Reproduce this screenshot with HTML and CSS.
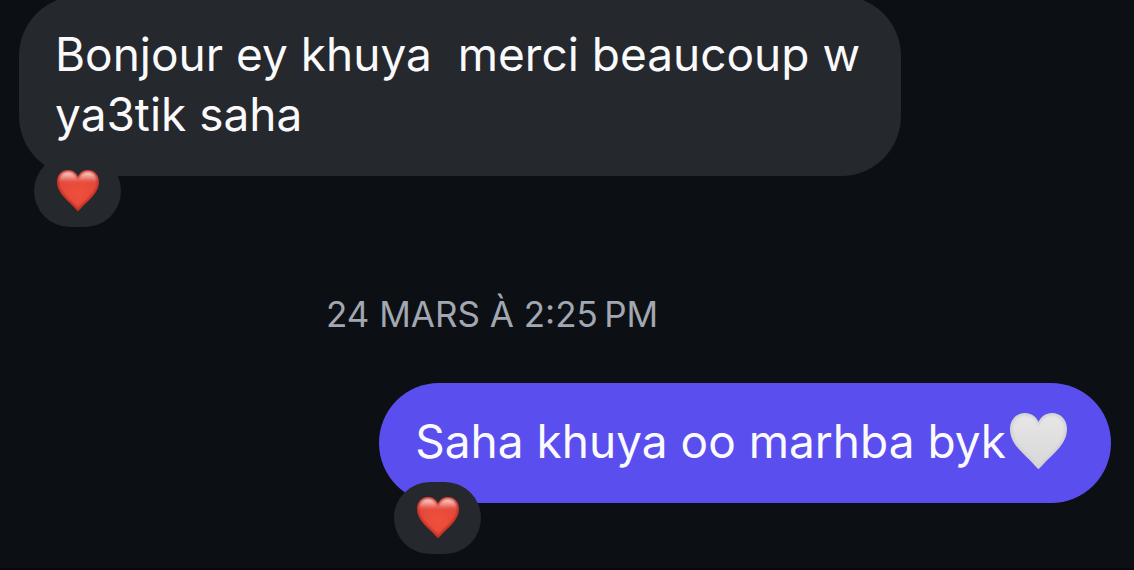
FILE: index.html
```
<!DOCTYPE html>
<html lang="fr">
<head>
  <meta charset="utf-8">
  <meta name="viewport" content="width=device-width, initial-scale=1">
  <title>Messages</title>
  <link rel="stylesheet" href="styles.css">
</head>
<body>
  <!-- Heart shapes and colours shared by the emojis -->
  <svg class="defs" aria-hidden="true">
    <defs>
      <radialGradient id="red" cx="0.5" cy="0.6" r="0.6">
        <stop offset="0" stop-color="#f0503c"/>
        <stop offset="1" stop-color="#e2483a"/>
      </radialGradient>
      <linearGradient id="shine" x1="0" y1="0" x2="0" y2="1">
        <stop offset="0" stop-color="#fff" stop-opacity="0.8"/>
        <stop offset="0.28" stop-color="#fff" stop-opacity="0"/>
      </linearGradient>
      <linearGradient id="white" x1="0" y1="0" x2="0" y2="1">
        <stop offset="0" stop-color="#e6e6e6"/>
        <stop offset="1" stop-color="#d9d9d9"/>
      </linearGradient>
      <filter id="soft" x="-10%" y="-10%" width="120%" height="120%">
        <feGaussianBlur stdDeviation="1.2"/>
      </filter>
      <path id="heart" d="M28.500 56C27.500 56 24 51 17 44.500C7 35 0 27 0 16C0 6.500 6.500 0 15 0C21.500 0 26 3.500 28.500 9C31 3.500 35.500 0 42 0C50.500 0 57 6.500 57 16C57 27 50 35 40 44.500C33 51 29.500 56 28.500 56Z"/>
      <path id="inner" d="M28.500 52C27 50 24 47 19 42.500C10 34 2.500 26 2.500 16C2.500 8 8 2.500 15 2.500C21.500 2.500 26 7 28.500 13C31 7 35.500 2.500 42 2.500C49 2.500 54.500 8 54.500 16C54.500 26 47 34 38 42.500C33 47 30 50 28.500 52Z"/>
      <g id="red-heart">
        <use href="#heart" fill="#c23024"/>
        <use href="#inner" fill="url(#red)" filter="url(#soft)"/>
        <use href="#inner" fill="url(#shine)" filter="url(#soft)"/>
      </g>
      <g id="white-heart">
        <use href="#heart" fill="#d3d3d5"/>
        <use href="#inner" fill="url(#white)" filter="url(#soft)"/>
      </g>
    </defs>
  </svg>

  <main class="chat">
    <div class="message received">
      <p class="bubble">Bonjour ey khuya&nbsp; merci beaucoup w ya3tik saha</p>
      <span class="reaction">
        <svg class="heart" viewBox="0 0 57 57" role="img" aria-label="Cœur rouge"><use href="#red-heart"/></svg>
      </span>
    </div>

    <time class="timestamp">24 MARS À 2:25&#8239;PM</time>

    <div class="message sent">
      <p class="bubble">Saha khuya oo marhba byk<svg class="emoji" viewBox="0 0 57 57" role="img" aria-label="Cœur blanc"><use href="#white-heart"/></svg></p>
      <span class="reaction">
        <svg class="heart" viewBox="0 0 57 57" role="img" aria-label="Cœur rouge"><use href="#red-heart"/></svg>
      </span>
    </div>
  </main>
</body>
</html>
```
FILE: styles.css
```
body {
  display: flow-root;
  margin: 0;
  background-color: #09070c;
  color: #fafafc;
  font-family: Inter, "Liberation Sans", sans-serif;
}

.defs {
  position: absolute;
  width: 0;
  height: 0;
}

/* the first bubble is scrolled slightly past the top edge */
.chat {
  display: flex;
  flex-direction: column;
  margin-top: -4px;
  padding: 0 23px 65px 19px;
  background-color: #0c1014;
}

.message {
  position: relative;
  max-width: 882px;
}

.bubble {
  margin: 0;
  padding: 28px 36px 32px;
  border-radius: 60px;
  background-color: #25282d;
  font-size: 46px;
  line-height: 60px;
}

.received {
  align-self: flex-start;
}

.sent {
  align-self: flex-end;
}

.sent .bubble {
  display: flex;
  align-items: center;
  background-color: #5b4eef;
}

.emoji {
  width: 57px;
  height: 57px;
  margin: 0 8px 0 4px;
}

.reaction {
  position: absolute;
  top: calc(100% - 21px);
  left: 15px;
  display: flex;
  align-items: center;
  justify-content: center;
  width: 87px;
  height: 72px;
  border-radius: 36px;
  background-color: #25282d;
}

.heart {
  width: 42px;
  height: 42px;
}

.timestamp {
  padding: 118px 146px 49px 0;
  color: #a2a7b1;
  font-size: 35px;
  line-height: 40px;
  text-align: center;
}
```
